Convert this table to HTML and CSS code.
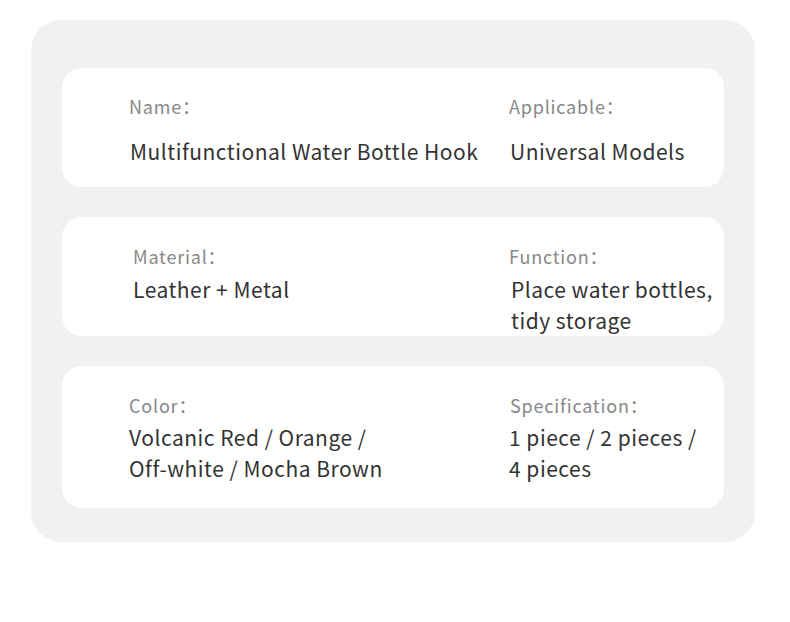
FILE: index.html
```html
<!DOCTYPE html>
<html lang="en">
<head>
    <meta charset="UTF-8">
    <title>Product Specifications</title>
    <link rel="stylesheet" href="styles.css">
</head>
<body>
    <div class="panel">
        <div class="card card-first">
            <div class="col col-left">
                <div class="label">Name：</div>
                <div class="value">Multifunctional Water Bottle Hook</div>
            </div>
            <div class="col col-right">
                <div class="label">Applicable：</div>
                <div class="value">Universal Models</div>
            </div>
        </div>
        <div class="card card-second">
            <div class="col col-left">
                <div class="label">Material：</div>
                <div class="value">Leather + Metal</div>
            </div>
            <div class="col col-right">
                <div class="label">Function：</div>
                <div class="value">Place water bottles,<br>tidy storage</div>
            </div>
        </div>
        <div class="card card-third">
            <div class="col col-left">
                <div class="label">Color：</div>
                <div class="value">Volcanic Red / Orange /<br>Off-white / Mocha Brown</div>
            </div>
            <div class="col col-right">
                <div class="label">Specification：</div>
                <div class="value">1 piece / 2 pieces /<br>4 pieces</div>
            </div>
        </div>
    </div>
</body>
</html>
```

FILE: styles.css
```css
body {
    margin: 0;
    padding: 20px 0 0 31px;
    background-color: #fff;
    font-family: "Noto Sans CJK SC", "Noto Sans", sans-serif;
}
.panel {
    width: 724px;
    height: 522px;
    box-sizing: border-box;
    padding: 48px 31px 34px;
    background-color: #f1f1f1;
    border-radius: 30px;
    display: flex;
    flex-direction: column;
    gap: 30px;
}
.card {
    background-color: #fff;
    border-radius: 20px;
    display: flex;
    box-sizing: border-box;
    padding-left: 67px;
}
.col-left {
    width: 380px;
}
.label {
    font-size: 18px;
    line-height: 24px;
    letter-spacing: 0.8px;
    color: #888;
}
.value {
    font-size: 21px;
    line-height: 31px;
    letter-spacing: 0.5px;
    color: #333;
}
.card-first {
    height: 119px;
    padding-top: 26px;
}
.card-first .value {
    margin-top: 18px;
    padding-left: 1px;
}
.card-second {
    height: 119px;
    padding-top: 27px;
    padding-left: 71px;
}
.card-second .col-left {
    width: 376px;
}
.card-second .value {
    margin-top: 6px;
}
.card-second .col-right .value {
    padding-left: 2px;
}
.card-third {
    height: 142px;
    padding-top: 27px;
}
.card-third .value {
    margin-top: 5px;
}
.card-third .col-right {
    padding-left: 1px;
}
.card-third .col-right .value {
    margin-left: -1px;
}
```
